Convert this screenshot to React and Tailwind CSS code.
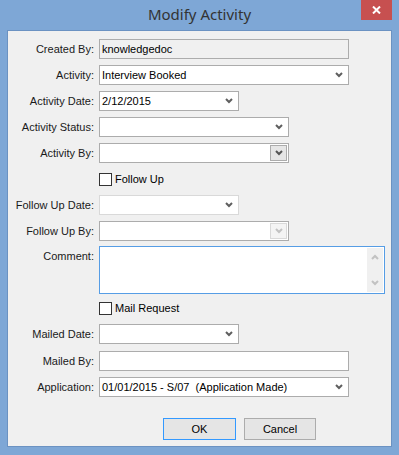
import React from "react";

const font = { fontFamily: '"Liberation Sans", Arial, sans-serif' };

const Chevron = ({ color = "#5f5f5f" }) => (
  <svg width="8" height="6" viewBox="0 0 8 6" className="shrink-0">
    <path d="M1 1 L4 4 L7 1" fill="none" stroke={color} strokeWidth="2" />
  </svg>
);

const Label = ({ children }) => (
  <div className="w-[86px] text-right text-[11px] text-[#1a1a1a] leading-[20px] shrink-0 whitespace-nowrap">
    {children}
  </div>
);

const Row = ({ label, className = "", children }) => (
  <div className={"flex items-start gap-[5px] " + className}>
    <Label>{label}</Label>
    {children}
  </div>
);

// plain combo box with chevron on the right
const Combo = ({ width, value, light }) => (
  <div
    className={
      "h-[20px] flex items-center justify-between bg-white border pl-[2px] pr-[5px] text-[11px] text-black whitespace-nowrap " +
      width +
      (light ? " border-[#d9d9d9]" : " border-[#acacac]")
    }
  >
    <span className="leading-[18px]">{value}</span>
    <Chevron />
  </div>
);

// combo box with a separate drop button
const ButtonCombo = ({ disabled }) => (
  <div className="h-[20px] w-[190px] flex items-center justify-end bg-white border border-[#acacac] pr-px">
    <div
      className={
        "w-[17px] h-[16px] flex items-center justify-center border " +
        (disabled ? "bg-[#f4f4f4] border-[#d9d9d9]" : "bg-[#e6e6e6] border-[#acacac]")
      }
    >
      <Chevron color={disabled ? "#c2c2c2" : "#555555"} />
    </div>
  </div>
);

const TextBox = ({ width, value, readOnly }) => (
  <div
    className={
      "h-[20px] flex items-center border border-[#acacac] pl-[2px] text-[11px] text-black " +
      width +
      (readOnly ? " bg-[#f0f0f0]" : " bg-white")
    }
  >
    {value}
  </div>
);

const Check = ({ label, className = "" }) => (
  <div className={"flex items-center h-[20px] pl-[91px] " + className}>
    <div className="w-[13px] h-[13px] border border-[#333333] bg-white" />
    <span className="ml-[3px] text-[11px] text-black">{label}</span>
  </div>
);

export default function App() {
  return (
    <div className="w-[399px] h-[455px] bg-[#7ea7d6] flex flex-col" style={font}>
      {/* title bar */}
      <div className="h-[30px] flex items-start shrink-0">
        <div
          className="flex-1 pl-[38px] pt-[4px] text-center text-[15px] text-[#333333] leading-[20px]"
          style={{ fontFamily: '"Noto Sans", "Liberation Sans", sans-serif' }}
        >
          Modify Activity
        </div>
        <div className="w-[31px] h-[20px] mr-[7px] bg-[#c75050] flex items-center justify-center">
          <svg width="9" height="8" viewBox="0 0 9 8">
            <path d="M1 0.5 L8 7.5 M8 0.5 L1 7.5" stroke="#ffffff" strokeWidth="2" />
          </svg>
        </div>
      </div>

      {/* client area */}
      <div className="mx-[7px] h-[417px] bg-[#f0f0f0] border border-[#6b92c2] flex flex-col pt-[8px]">
        <Row label="Created By:">
          <TextBox width="w-[250px]" value="knowledgedoc" readOnly />
        </Row>
        <Row label="Activity:" className="mt-[6px]">
          <Combo width="w-[250px]" value="Interview Booked" />
        </Row>
        <Row label="Activity Date:" className="mt-[6px]">
          <Combo width="w-[140px]" value="2/12/2015" />
        </Row>
        <Row label="Activity Status:" className="mt-[6px]">
          <Combo width="w-[190px]" value="" />
        </Row>
        <Row label="Activity By:" className="mt-[6px]">
          <ButtonCombo />
        </Row>
        <Check label="Follow Up" className="mt-[6px]" />
        <Row label="Follow Up Date:" className="mt-[6px]">
          <Combo width="w-[140px]" value="" light />
        </Row>
        <Row label="Follow Up By:" className="mt-[6px]">
          <ButtonCombo disabled />
        </Row>
        <Row label="Comment:" className="mt-[5px]">
          <div className="w-[286px] h-[48px] bg-white border border-[#569de5] flex justify-end pr-px py-px">
            <div className="w-[16px] bg-[#f0f0f0] flex flex-col items-center justify-between py-[6px]">
              <svg width="8" height="6" viewBox="0 0 8 6">
                <path d="M1 5 L4 2 L7 5" fill="none" stroke="#c2c2c2" strokeWidth="2" />
              </svg>
              <Chevron color="#c2c2c2" />
            </div>
          </div>
        </Row>
        <Check label="Mail Request" className="mt-[4px]" />
        <Row label="Mailed Date:" className="mt-[6px]">
          <Combo width="w-[140px]" value="" />
        </Row>
        <Row label="Mailed By:" className="mt-[7px]">
          <TextBox width="w-[250px]" value="" />
        </Row>
        <Row label="Application:" className="mt-[6px]">
          <Combo width="w-[250px]" value={"01/01/2015 - S/07\u00a0 (Application Made)"} />
        </Row>

        <div className="mt-[21px] flex pl-[155px] gap-[8px]">
          <button className="w-[73px] h-[22px] bg-[#e5e5e5] border border-[#3399ff] text-[11px] text-black">
            OK
          </button>
          <button className="w-[72px] h-[22px] bg-[#e5e5e5] border border-[#acacac] text-[11px] text-black">
            Cancel
          </button>
        </div>
      </div>
    </div>
  );
}
